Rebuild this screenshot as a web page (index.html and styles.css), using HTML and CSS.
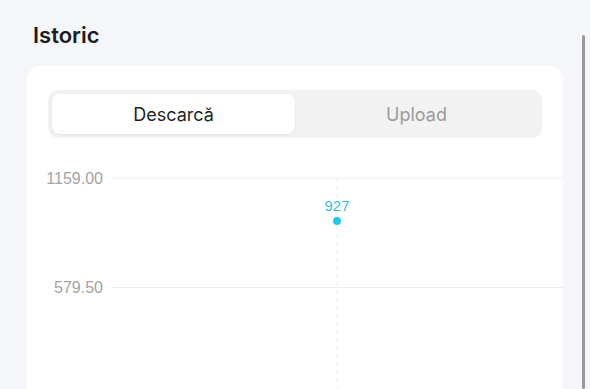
FILE: index.html
```html
<!DOCTYPE html>
<html lang="ro">
<head>
    <meta charset="UTF-8">
    <meta name="viewport" content="width=device-width, initial-scale=1.0">
    <title>Istoric</title>
    <link rel="stylesheet" href="styles.css">
</head>
<body>

    <div class="page">
        <h1 class="title">Istoric</h1>

        <div class="card">
            <div class="segment">
                <button class="seg-btn active">Descarcă</button>
                <button class="seg-btn">Upload</button>
            </div>

            <svg class="chart" width="536" height="260" viewBox="0 0 536 260">
                <line class="grid" x1="85" y1="28" x2="536" y2="28"></line>
                <line class="grid" x1="85" y1="137.5" x2="536" y2="137.5"></line>
                <line class="grid" x1="85" y1="247" x2="536" y2="247"></line>
                <line class="guide" x1="310" y1="28" x2="310" y2="260"></line>

                <text class="axis" x="76" y="34">1159.00</text>
                <text class="axis" x="76" y="143">579.50</text>
                <text class="axis" x="76" y="252">0</text>

                <text class="point-label" x="310" y="61">927</text>
                <circle class="point" cx="310" cy="71" r="4"></circle>
            </svg>
        </div>
    </div>

    <div class="scrollbar"></div>

</body>
</html>
```

FILE: styles.css
```css
body {
    margin: 0;
    background-color: #f5f6fa;
    font-family: Inter, "Noto Sans", sans-serif;
    overflow: hidden;
}
.page {
    padding: 22px 0 0 27px;
}
.title {
    margin: 0 0 18px 6px;
    font-size: 22px;
    line-height: 26px;
    font-weight: 600;
    color: #1c1c1e;
}
.card {
    width: 494px;
    padding: 24px 21px 0;
    background-color: #fff;
    border-radius: 14px;
    height: 400px;
}
.segment {
    display: flex;
    padding: 4px;
    background-color: #f2f2f3;
    border-radius: 10px;
}
.seg-btn {
    flex: 1;
    height: 40px;
    border: none;
    border-radius: 8px;
    background: transparent;
    font-family: Inter, "Noto Sans", sans-serif;
    font-size: 18px;
    color: #9b9b9b;
}
.seg-btn.active {
    background-color: #fff;
    color: #1f1f1f;
    box-shadow: 0 1px 3px rgba(0, 0, 0, 0.06);
}
.chart {
    display: block;
    margin: 12px -21px 0;
}
.grid {
    stroke: #ededed;
    stroke-width: 1;
}
.guide {
    stroke: #ececec;
    stroke-width: 1;
    stroke-dasharray: 4 4;
}
.axis {
    font-family: "Liberation Sans", Arial, sans-serif;
    font-size: 16px;
    fill: #a3a3a3;
    text-anchor: end;
}
.point-label {
    font-family: "Liberation Sans", Arial, sans-serif;
    font-size: 15px;
    fill: #3bbfd9;
    text-anchor: middle;
}
.point {
    fill: #1ec8e8;
}
.scrollbar {
    position: absolute;
    top: 35px;
    bottom: 0;
    left: 582px;
    width: 3px;
    background-color: #999;
    border-radius: 2px;
}
```
